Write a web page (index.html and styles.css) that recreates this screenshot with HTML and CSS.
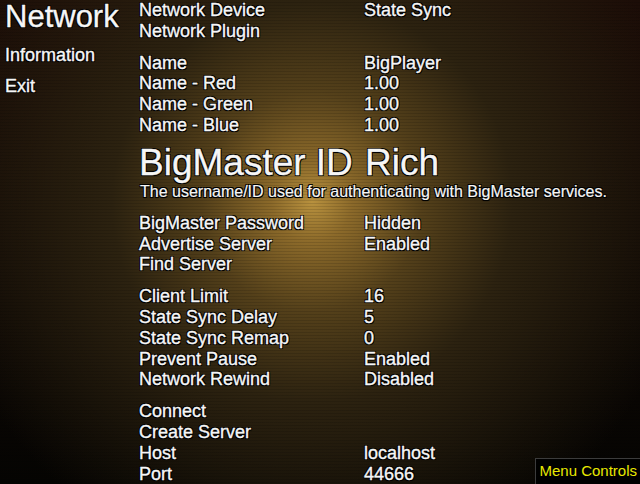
FILE: index.html
```html
<!DOCTYPE html>
<html lang="en">
<head>
    <meta charset="UTF-8">
    <meta name="viewport" content="width=device-width, initial-scale=1.0">
    <title>Network</title>
    <link rel="stylesheet" href="styles.css">
</head>
<body>

    <div class="screen">
        <!-- Left menu -->
        <div class="sidebar">
            <div class="sidebar-title">Network</div>
            <div class="sidebar-item">Information</div>
            <div class="sidebar-item">Exit</div>
        </div>

        <!-- Settings list -->
        <div class="settings">
            <div class="group">
                <div class="row"><span class="label">Network Device</span><span class="value">State Sync</span></div>
                <div class="row"><span class="label">Network Plugin</span><span class="value"></span></div>
            </div>

            <div class="group">
                <div class="row"><span class="label">Name</span><span class="value">BigPlayer</span></div>
                <div class="row"><span class="label">Name - Red</span><span class="value">1.00</span></div>
                <div class="row"><span class="label">Name - Green</span><span class="value">1.00</span></div>
                <div class="row"><span class="label">Name - Blue</span><span class="value">1.00</span></div>
            </div>

            <div class="group selected-group">
                <div class="row selected"><span class="label">BigMaster ID</span><span class="value">Rich</span></div>
                <div class="description">The username/ID used for authenticating with BigMaster services.</div>
            </div>

            <div class="group">
                <div class="row"><span class="label">BigMaster Password</span><span class="value">Hidden</span></div>
                <div class="row"><span class="label">Advertise Server</span><span class="value">Enabled</span></div>
                <div class="row"><span class="label">Find Server</span><span class="value"></span></div>
            </div>

            <div class="group">
                <div class="row"><span class="label">Client Limit</span><span class="value">16</span></div>
                <div class="row"><span class="label">State Sync Delay</span><span class="value">5</span></div>
                <div class="row"><span class="label">State Sync Remap</span><span class="value">0</span></div>
                <div class="row"><span class="label">Prevent Pause</span><span class="value">Enabled</span></div>
                <div class="row"><span class="label">Network Rewind</span><span class="value">Disabled</span></div>
            </div>

            <div class="group">
                <div class="row"><span class="label">Connect</span><span class="value"></span></div>
                <div class="row"><span class="label">Create Server</span><span class="value"></span></div>
                <div class="row"><span class="label">Host</span><span class="value">localhost</span></div>
                <div class="row"><span class="label">Port</span><span class="value">44666</span></div>
            </div>
        </div>

        <div class="menu-controls">Menu Controls</div>
    </div>

</body>
</html>
```

FILE: styles.css
```css
html, body {
    margin: 0;
    padding: 0;
    width: 640px;
    height: 484px;
    overflow: hidden;
    background: #000;
}

.screen {
    position: relative;
    display: flex;
    width: 640px;
    height: 484px;
    overflow: hidden;
    font-family: "Liberation Sans", Arial, sans-serif;
    color: #f6f6f6;
    background:
        repeating-linear-gradient(to bottom, rgba(0, 0, 0, 0) 0, rgba(0, 0, 0, 0) 2px, rgba(0, 0, 0, 0.12) 2px, rgba(0, 0, 0, 0.12) 3px),
        radial-gradient(circle at 312px 202px, #b8913e 0, #8c6a2a 40px, #54401a 110px, #2c2210 200px, rgba(16, 12, 5, 0) 380px),
        linear-gradient(to bottom, #1c0d07 0, #120a05 45%, #050402 100%);
}

/* all text gets a thin dark outline */
.sidebar,
.settings {
    -webkit-text-stroke: 0.35px #f6f6f6;
    text-shadow:
        1px 1px 0 #000,
        -1px 1px 0 #000,
        1px -1px 0 #000,
        -1px -1px 0 #000,
        0 1px 1px #000;
}

.sidebar {
    width: 134px;
    padding-left: 5px;
    flex-shrink: 0;
}

.sidebar-title {
    font-size: 31px;
    line-height: 34px;
    margin-bottom: 6px;
}

.sidebar-item {
    font-size: 18px;
    line-height: 31px;
}

.settings {
    flex: 1;
    font-size: 18px;
}

.group {
    margin-bottom: 11px;
}

.row {
    display: flex;
    line-height: 20.8px;
    white-space: nowrap;
}

.label {
    width: 225px;
    flex-shrink: 0;
}

.selected-group {
    margin-top: -3px;
}

.row.selected {
    font-size: 37px;
    line-height: 37px;
}

.row.selected .value {
    margin-left: 1px;
}

.description {
    font-size: 16px;
    line-height: 21px;
    padding-left: 1px;
    white-space: nowrap;
    -webkit-text-stroke: 0.2px #f6f6f6;
}

.menu-controls {
    position: absolute;
    right: -1px;
    bottom: -1px;
    padding: 2px 3px 4px 3px;
    font-size: 15px;
    line-height: 19px;
    color: #e8e800;
    background: #000;
    border: 1px solid #3c3c3c;
}
```
